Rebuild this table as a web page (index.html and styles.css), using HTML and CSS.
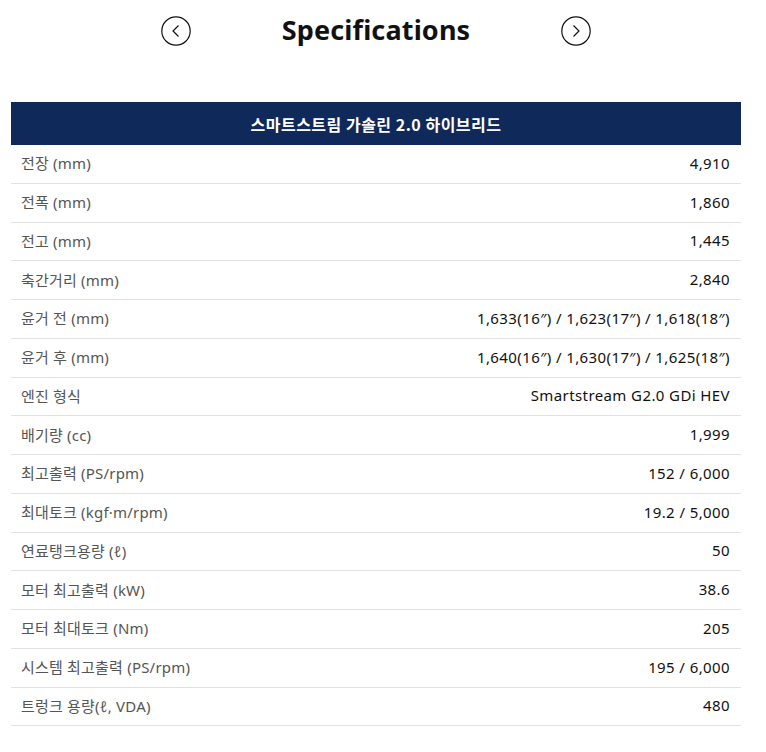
FILE: index.html
```html
<!DOCTYPE html>
<html>

<head>
    <title>Specifications</title>
    <link rel="stylesheet" href="styles.css">
</head>

<body>
    <div class="page">
        <div class="title-bar">
            <button class="nav-btn" aria-label="이전">
                <svg width="30" height="30" viewBox="0 0 30 30">
                    <circle cx="15" cy="15" r="14.2" fill="none" stroke="#111" stroke-width="1.2" />
                    <path d="M17.5 9.5 L12 15 L17.5 20.5" fill="none" stroke="#111" stroke-width="1.2" />
                </svg>
            </button>
            <h1>Specifications</h1>
            <button class="nav-btn" aria-label="다음">
                <svg width="30" height="30" viewBox="0 0 30 30">
                    <circle cx="15" cy="15" r="14.2" fill="none" stroke="#111" stroke-width="1.2" />
                    <path d="M12.5 9.5 L18 15 L12.5 20.5" fill="none" stroke="#111" stroke-width="1.2" />
                </svg>
            </button>
        </div>

        <div class="spec">
            <div class="spec-head">스마트스트림 가솔린 2.0 하이브리드</div>
            <div class="row"><span class="label">전장 (mm)</span><span class="value">4,910</span></div>
            <div class="row"><span class="label">전폭 (mm)</span><span class="value">1,860</span></div>
            <div class="row"><span class="label">전고 (mm)</span><span class="value">1,445</span></div>
            <div class="row"><span class="label">축간거리 (mm)</span><span class="value">2,840</span></div>
            <div class="row"><span class="label">윤거 전 (mm)</span><span class="value">1,633(16″) / 1,623(17″) / 1,618(18″)</span></div>
            <div class="row"><span class="label">윤거 후 (mm)</span><span class="value">1,640(16″) / 1,630(17″) / 1,625(18″)</span></div>
            <div class="row"><span class="label">엔진 형식</span><span class="value">Smartstream G2.0 GDi HEV</span></div>
            <div class="row"><span class="label">배기량 (cc)</span><span class="value">1,999</span></div>
            <div class="row"><span class="label">최고출력 (PS/rpm)</span><span class="value">152 / 6,000</span></div>
            <div class="row"><span class="label">최대토크 (kgf·m/rpm)</span><span class="value">19.2 / 5,000</span></div>
            <div class="row"><span class="label">연료탱크용량 (ℓ)</span><span class="value">50</span></div>
            <div class="row"><span class="label">모터 최고출력 (kW)</span><span class="value">38.6</span></div>
            <div class="row"><span class="label">모터 최대토크 (Nm)</span><span class="value">205</span></div>
            <div class="row"><span class="label">시스템 최고출력 (PS/rpm)</span><span class="value">195 / 6,000</span></div>
            <div class="row"><span class="label">트렁크 용량(ℓ, VDA)</span><span class="value">480</span></div>
        </div>
    </div>
</body>

</html>
```

FILE: styles.css
```css
body,
html {
    margin: 0;
    padding: 0;
    background: #fff;
}

body {
    font-family: "Noto Sans", "Noto Sans CJK KR", sans-serif;
    color: #111;
}

.page {
    width: 730px;
    margin-left: 11px;
}

.title-bar {
    display: flex;
    align-items: center;
    justify-content: center;
    height: 61px;
    margin-bottom: 41px;
}

.title-bar h1 {
    margin: 0 0 2px;
    font-size: 27px;
    font-weight: 700;
    letter-spacing: 0.15px;
    width: 370px;
    text-align: center;
}

.nav-btn {
    border: none;
    background: none;
    padding: 0;
    width: 30px;
    height: 30px;
    display: flex;
}

.spec-head {
    background: #0f2a5a;
    color: #fff;
    height: 43px;
    display: flex;
    align-items: center;
    justify-content: center;
    font-size: 16px;
    font-weight: 700;
    letter-spacing: 0.5px;
    font-family: "Noto Sans CJK KR", sans-serif;
}

.row {
    display: flex;
    justify-content: space-between;
    align-items: center;
    height: 38.75px;
    box-sizing: border-box;
    border-bottom: 1px solid #e2e2e2;
    padding: 0 11px 2px 10px;
    font-size: 15px;
}

.label {
    color: #555;
    letter-spacing: 0.2px;
}

.value {
    color: #111;
    letter-spacing: 0.4px;
}
```
